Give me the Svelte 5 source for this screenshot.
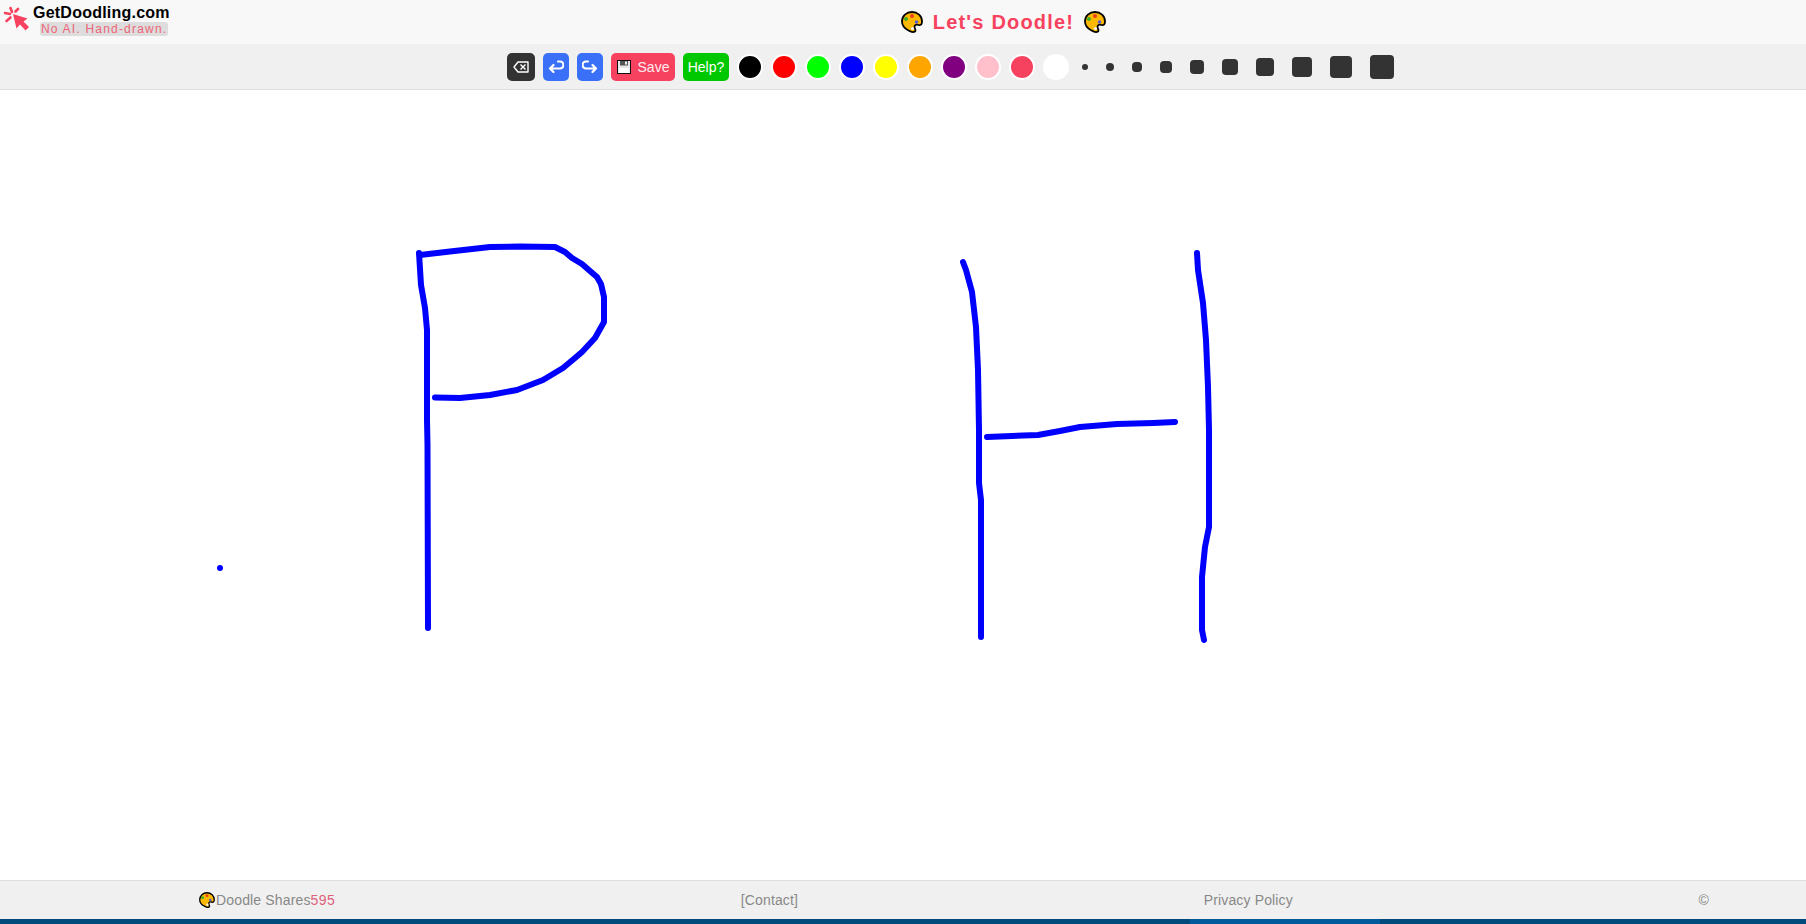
<script>
	const swatches = ['#000000', '#ff0000', '#00ff00', '#0000ff', '#ffff00', '#ffa500', '#800080', '#ffc0cb', '#f7425f', '#ffffff'];
	const sizes = [6, 8, 10, 12, 14, 16, 18, 20, 22, 24];

	const strokes = [
		'M419 253 L421 285 L425 308 L427 330 L427 420 L427.5 445 L428 628',
		'M420 255 L450 251.5 L490 247 L520 246.5 L555 247 L565 252 L572 258 L582 264 L590 271 L597 277 L601 284 L604 297 L604 322 L595 338 L582 352 L575 358 L563 368 L543 380 L517 390 L490 395 L460 398 L435 397.5',
		'M963 262 L966 270 L972 292 L976 327 L978 370 L979 430 L979 483 L981 500 L981 637',
		'M987 437 L1038 435 L1060 431 L1080 427 L1117 424 L1153 423 L1175 422',
		'M1197 253 L1198 270 L1203 303 L1206 340 L1208 387 L1209 430 L1209 527 L1205 547 L1202 577 L1202 630 L1204 640'
	];
</script>

{#snippet palette(size)}
	<svg class="palette" width={size} height={size} viewBox="0 0 22 22">
		<path
			d="M11 1 C16.5 1 21 5 21 10.5 C21 13.5 19.5 14.5 17.5 14 C15 13.2 13.5 14 13.5 16 C13.5 18 15.5 19 14 20.5 C12.5 21.5 10 21 7.5 19.5 C3.5 17.5 1 14.5 1 10.5 C1 5 5.5 1 11 1 Z"
			fill="#fdb900"
			stroke="#000"
			stroke-width="1.8"
		/>
		<circle cx="11" cy="5" r="2" fill="#e8401c" />
		<circle cx="5" cy="8" r="2" fill="#3fae2a" />
		<circle cx="15.5" cy="11" r="1.8" fill="#5a5ad8" />
		<circle cx="11.5" cy="17.5" r="1.6" fill="#f4f4f4" />
	</svg>
{/snippet}

<div class="page">
	<header class="top">
		<div class="brand">
			<svg class="cursor" width="28" height="28" viewBox="0 0 28 28">
				<g transform="translate(-2 -4)">
					<path d="M13 14 L16.5 28.5 L20 24.5 L25.5 30.5 L29 27 L23.5 21.5 L27.5 18.5 Z" fill="#f7425f" />
					<g stroke="#f7425f" stroke-width="2.6" stroke-linecap="round" fill="none">
						<path d="M10.5 8 L12 12" />
						<path d="M18 9 L15.5 11.5" />
						<path d="M5 13 L10 14" />
						<path d="M6.5 21 L10.5 17.5" />
					</g>
				</g>
			</svg>
			<div class="brand-text">
				<span class="brand-name">GetDoodling.com</span>
				<span class="brand-tag">No AI. Hand-drawn.</span>
			</div>
		</div>
		<h1 class="title">
			{@render palette(22)}
			<span>Let's Doodle!</span>
			{@render palette(22)}
		</h1>
	</header>

	<nav class="toolbar">
		<button class="tool dark" aria-label="Clear">
			<svg width="16" height="12" viewBox="0 0 16 12" fill="none" stroke="#fff" stroke-width="1.4">
				<path d="M5 1 H15 V11 H5 L1 6 Z" stroke-linejoin="round" />
				<path d="M7.5 3.5 L12.5 8.5 M12.5 3.5 L7.5 8.5" />
			</svg>
		</button>
		<button class="tool blue" aria-label="Undo">
			<svg width="16" height="14" viewBox="0 0 16 14" fill="none" stroke="#fff" stroke-width="2.2" stroke-linecap="round" stroke-linejoin="round">
				<path d="M10 1.5 H12 A3.5 3.5 0 0 1 12 8.5 H2 M5.5 5 L2 8.5 L5.5 12" />
			</svg>
		</button>
		<button class="tool blue" aria-label="Redo">
			<svg width="16" height="14" viewBox="0 0 16 14" fill="none" stroke="#fff" stroke-width="2.2" stroke-linecap="round" stroke-linejoin="round">
				<path d="M6 1.5 H4 A3.5 3.5 0 0 0 4 8.5 H14 M10.5 5 L14 8.5 L10.5 12" />
			</svg>
		</button>
		<button class="tool save">
			<svg width="14" height="14" viewBox="0 0 14 14">
				<rect x="0.5" y="0.5" width="13" height="13" fill="#e8e8e8" stroke="#111" />
				<rect x="3" y="1" width="8" height="4.5" fill="#555" />
				<rect x="8" y="1.5" width="2" height="3" fill="#eee" />
				<rect x="2" y="8" width="10" height="5" fill="#fff" />
			</svg>
			<span class="save-label">Save</span>
		</button>
		<button class="tool help">Help?</button>

		{#each swatches as color}
			<button class="swatch" style:background={color} aria-label={color}></button>
		{/each}

		{#each sizes as size}
			<button class="size" aria-label="Brush {size}">
				<span class="dot" style:width="{size}px" style:height="{size}px"></span>
			</button>
		{/each}
	</nav>

	<main class="canvas">
		<svg class="drawing" viewBox="0 90 1806 790" preserveAspectRatio="none">
			{#each strokes as d}
				<path {d} />
			{/each}
			<circle cx="220" cy="568" r="3" fill="#0000ff" />
		</svg>
	</main>

	<footer class="foot">
		<span class="shares">
			{@render palette(16)}<span class="shares-label">Doodle Shares</span><span class="count">595</span>
		</span>
		<span>[Contact]</span>
		<span>Privacy Policy</span>
		<span>©</span>
	</footer>

	<div class="strip">
		<div class="strip-left"></div>
		<div class="strip-mid"></div>
		<div class="strip-right"></div>
	</div>
</div>

<style>
	:global(body) {
		margin: 0;
		font-family: 'Liberation Sans', Arial, sans-serif;
		background: #fff;
	}

	.page {
		display: flex;
		flex-direction: column;
		height: 924px;
		overflow: hidden;
	}

	/* Header */

	.top {
		display: flex;
		align-items: center;
		flex: 0 0 44px;
		background: #f8f8f8;
	}

	.brand {
		display: flex;
		align-items: flex-start;
		align-self: flex-start;
		gap: 3px;
		width: 201px;
		padding-left: 2px;
		box-sizing: border-box;
	}

	.cursor {
		margin-top: 4px;
	}

	.brand-text {
		display: flex;
		flex-direction: column;
		align-items: flex-start;
		margin-top: 3px;
	}

	.brand-name {
		font-size: 16px;
		font-weight: bold;
		line-height: 19px;
		letter-spacing: 0.23px;
		color: #000;
	}

	.brand-tag {
		margin-left: 7px;
		padding: 0 1px;
		border-radius: 3px;
		background: #dddddd;
		color: #ee6478;
		font-size: 12px;
		line-height: 14px;
		letter-spacing: 1.2px;
		white-space: nowrap;
	}

	.title {
		display: flex;
		flex: 1;
		align-items: center;
		justify-content: center;
		gap: 10px;
		margin: 0;
		color: #f7425f;
		font-size: 20px;
		font-weight: bold;
		letter-spacing: 1.2px;
	}

	/* Toolbar */

	.toolbar {
		display: flex;
		align-items: center;
		gap: 8px;
		flex: 0 0 46px;
		box-sizing: border-box;
		padding-left: 507px;
		background: #f0f0f0;
		border-bottom: 1px solid #dfdfdf;
	}

	button {
		margin: 0;
		padding: 0;
		border: none;
		font-family: inherit;
	}

	.tool {
		display: flex;
		align-items: center;
		justify-content: center;
		height: 28px;
		border-radius: 5px;
		color: #fff;
		font-size: 14px;
	}

	.dark {
		width: 28px;
		background: #333;
	}

	.blue {
		width: 26px;
		background: #3a6ff7;
	}

	.save {
		gap: 7px;
		width: 64px;
		background: #f7425f;
	}

	.save-label {
		opacity: 0.9;
	}

	.help {
		width: 46px;
		background: #00c800;
	}

	.swatch {
		width: 26px;
		height: 26px;
		border: 2px solid #fff;
		border-radius: 50%;
		box-sizing: border-box;
	}

	.size {
		display: flex;
		padding: 5px;
		background: none;
	}

	.dot {
		display: block;
		border-radius: 4px;
		background: #333;
	}

	/* Canvas */

	.canvas {
		flex: 1;
		min-height: 0;
		background: #fff;
	}

	.drawing {
		display: block;
		width: 100%;
		height: 100%;
	}

	.drawing path {
		fill: none;
		stroke: #0000ff;
		stroke-width: 6;
		stroke-linecap: round;
		stroke-linejoin: round;
	}

	/* Footer */

	.foot {
		display: flex;
		align-items: center;
		justify-content: space-between;
		flex: 0 0 39px;
		box-sizing: border-box;
		padding: 0 97px 1px 199px;
		background: #f0f0f0;
		border-top: 1px solid #dddddd;
		color: #888;
		font-size: 14px;
		letter-spacing: 0.15px;
	}

	.shares {
		display: flex;
		align-items: center;
	}

	.shares-label {
		margin-left: 1px;
	}

	.count {
		color: #e0607a;
		letter-spacing: 0.4px;
	}

	.strip {
		display: flex;
		flex: 0 0 5px;
	}

	.strip-left {
		width: 1190px;
		background: #004a7c;
	}

	.strip-mid {
		width: 190px;
		background: #005a9c;
	}

	.strip-right {
		flex: 1;
		background: #004a7c;
	}
</style>
